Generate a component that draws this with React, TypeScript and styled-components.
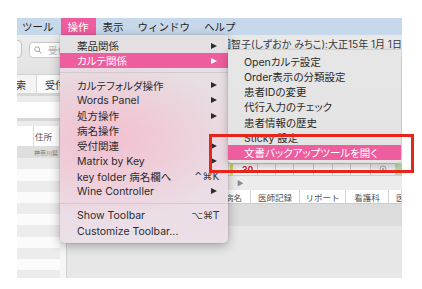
import React from 'react';
import styled, { createGlobalStyle, css } from 'styled-components';

const GlobalStyle = createGlobalStyle`
  html, body {
    margin: 0;
    padding: 0;
    background: #fff;
  }
  body {
    font-family: Inter, 'Noto Sans CJK JP', sans-serif;
  }
`;

const PINK = '#ee5d9e';

const Stage = styled.div`
  position: relative;
  width: 385px;
  height: 260px;
  margin: 18px 0 0 17px;
`;

const Screen = styled.div`
  position: relative;
  width: 385px;
  height: 260px;
  overflow: hidden;
  display: flex;
  flex-direction: column;
  background: #e8e8e8;
`;

const MenuBar = styled.div`
  flex: none;
  height: 17px;
  display: flex;
  background: #c7d8ea;
  color: #1f1f1f;
  font-size: 10.5px;
  & > :first-child {
    margin-left: -2px;
  }
`;

const MenuTitle = styled.div<{ $active?: boolean }>`
  display: flex;
  align-items: center;
  padding: 0 7px;
  ${(p) =>
    p.$active &&
    css`
      background: ${PINK};
      color: #fff;
    `}
`;

const Window = styled.div`
  flex: 1;
  display: flex;
  min-height: 0;
`;

/* ---------- left list pane ---------- */

const LeftPane = styled.div`
  width: 43px;
  flex: none;
  display: flex;
  flex-direction: column;
  overflow: hidden;
  background: #fafafa;
`;

const LeftToolbar = styled.div`
  height: 40px;
  flex: none;
  display: flex;
  align-items: flex-end;
  padding-bottom: 16px;
  box-sizing: border-box;
  background: linear-gradient(#ececec, #e2e2e2);
  border-bottom: 1px solid #d2d2d2;
`;

const ToolButton = styled.div`
  width: 12px;
  height: 18px;
  flex: none;
  margin-left: -7px;
  box-sizing: border-box;
  border: 1px solid #c2c2c2;
  border-radius: 4px;
  background: #f7f7f7;
`;

const SearchBox = styled.div`
  width: 48px;
  height: 16px;
  flex: none;
  margin-left: 7px;
  box-sizing: border-box;
  display: flex;
  align-items: center;
  gap: 6px;
  padding-left: 4px;
  border: 1px solid #c9c9c9;
  border-radius: 4px;
  background: #fff;
  color: #b0b0b0;
  font-size: 9.5px;
  white-space: nowrap;
  overflow: hidden;
`;

const SearchGlyph = styled.svg`
  flex: none;
  width: 8px;
  height: 8px;
`;

const TabRow = styled.div`
  height: 18px;
  flex: none;
  display: flex;
  background: #f2f2f2;
  font-size: 10px;
  color: #333;
`;

const Tab = styled.div<{ $w: number; $align: 'left' | 'right'; $selected?: boolean }>`
  width: ${(p) => p.$w}px;
  flex: none;
  display: flex;
  align-items: center;
  overflow: hidden;
  justify-content: ${(p) => (p.$align === 'right' ? 'flex-end' : 'flex-start')};
  padding: ${(p) => (p.$align === 'right' ? '0 10px 0 0' : '0 0 0 8px')};
  box-sizing: border-box;
  white-space: nowrap;
  background: ${(p) => (p.$selected ? '#f4f4f4' : '#fbfbfb')};
  border-right: 1px solid #d4d4d4;
`;

const GroupBar = styled.div<{ $h: number }>`
  height: ${(p) => p.$h}px;
  flex: none;
  box-sizing: border-box;
  background: #ececec;
  border-top: 3px solid #d8d8d8;
`;

const BlankRow = styled.div<{ $h: number }>`
  height: ${(p) => p.$h}px;
  flex: none;
  background: #fff;
`;

const ListHeader = styled.div`
  height: 20px;
  flex: none;
  display: flex;
  background: #fff;
  font-size: 8.5px;
  color: #555;
`;

const ListHeadCell = styled.div<{ $w?: number }>`
  ${(p) => (p.$w ? `width: ${p.$w}px; flex: none;` : 'flex: 1;')}
  display: flex;
  align-items: center;
  padding-left: 1px;
  white-space: nowrap;
  border-right: 1px solid #dcdcdc;
`;

const ListRow = styled.div`
  height: 12px;
  flex: none;
  display: flex;
  align-items: center;
  padding-left: 17px;
  background: #dedede;
  font-size: 6px;
  color: #777;
  white-space: nowrap;
`;

const Stripes = styled.div`
  flex: 1;
  background: repeating-linear-gradient(
    #ececec 0px,
    #ececec 11.25px,
    #fbfbfb 11.25px,
    #fbfbfb 22.5px
  );
`;

const Gutter = styled.div`
  width: 7px;
  flex: none;
  box-sizing: border-box;
  background: #f6f6f6;
  border-right: 1px solid #cfcfcf;
`;

/* ---------- right chart pane ---------- */

const RightPane = styled.div`
  flex: 1;
  display: flex;
  flex-direction: column;
  min-width: 0;
`;

const TitleRow = styled.div`
  height: 17px;
  flex: none;
  display: flex;
  align-items: center;
  padding-left: 144px;
  overflow: hidden;
  white-space: nowrap;
  background: #e8e8e8;
  color: #3a3a3a;
  font-size: 10px;
  font-feature-settings: 'palt' 1;
`;

const SheetBody = styled.div`
  height: 111px;
  flex: none;
  background: #f2f2f2;
`;

const CalendarRow = styled.div`
  height: 13px;
  flex: none;
  display: flex;
  box-sizing: border-box;
  background: #f5f5f5;
  border-top: 1px solid #d6d6d6;
  border-bottom: 1px solid #b9ddb0;
`;

const CalSpacer = styled.div`
  width: 163px;
  flex: none;
`;

const CalMark = styled.div`
  width: 3px;
  flex: none;
  background: #d6df6e;
`;

const CalCell = styled.div<{ $w: number; $today?: boolean }>`
  width: ${(p) => p.$w}px;
  flex: none;
  display: flex;
  align-items: center;
  box-sizing: border-box;
  border-right: 1px solid #cdcdcd;
  background: #fafafa;
  ${(p) =>
    p.$today &&
    css`
      padding-left: 9px;
      color: #d8262c;
      font-weight: 700;
      font-size: 8.5px;
    `}
`;

const CalIconCell = styled.div`
  width: 24px;
  flex: none;
  display: flex;
  align-items: center;
  justify-content: center;
  background: #f1f1f1;
`;

const CalGreen = styled.div`
  flex: 1;
  background: #b4dcab;
`;

const ExpandRow = styled.div`
  height: 14px;
  flex: none;
  display: flex;
  align-items: center;
  padding-left: 170px;
  background: #ececec;
  color: #8a8a8a;
  font-size: 7px;
`;

const ColumnHeader = styled.div`
  height: 14px;
  flex: none;
  display: flex;
  box-sizing: border-box;
  background: #fff;
  border-bottom: 1px solid #cbcbcb;
  font-size: 8.5px;
  color: #555;
`;

const HeadCell = styled.div<{ $w?: number; $align: 'right' | 'center' | 'left' }>`
  ${(p) => (p.$w ? `width: ${p.$w}px; flex: none;` : 'flex: 1;')}
  display: flex;
  align-items: center;
  box-sizing: border-box;
  white-space: nowrap;
  overflow: hidden;
  justify-content: ${(p) =>
    p.$align === 'right' ? 'flex-end' : p.$align === 'center' ? 'center' : 'flex-start'};
  padding: ${(p) => (p.$align === 'right' ? '0 8px 0 0' : p.$align === 'left' ? '0 0 0 7px' : '0')};
  border-right: 1px solid #d6d6d6;
`;

const DarkBand = styled.div`
  height: 22px;
  flex: none;
  background: #dcdcdc;
`;

const Rest = styled.div`
  flex: 1;
  background: #e7e7e7;
`;

/* ---------- menus ---------- */

const Dropdown = styled.div`
  position: absolute;
  left: 43px;
  top: 17px;
  width: 168px;
  padding: 3px 0 4px;
  box-sizing: border-box;
  border-radius: 0 0 5px 5px;
  background:
    radial-gradient(ellipse 75% 40% at 28% 50%, rgba(243, 190, 206, 0.95), rgba(243, 190, 206, 0) 100%),
    linear-gradient(#e4e1e3, #eadbe2 55%, #ebdfe8);
  box-shadow: 0 3px 11px rgba(0, 0, 0, 0.3), 0 0 0 0.5px rgba(0, 0, 0, 0.12);
  color: #2b2b2b;
  font-size: 10.5px;
  font-feature-settings: 'palt' 1;
  z-index: 2;
`;

const Submenu = styled.div`
  position: absolute;
  left: 211px;
  top: 32px;
  width: 173px;
  padding: 3.4px 0 2.5px;
  box-sizing: border-box;
  border-radius: 0 0 4px 4px;
  background: linear-gradient(#e6e6e6, #e3e3e3);
  box-shadow: 0 3px 9px rgba(0, 0, 0, 0.25), 0 0 0 0.5px rgba(0, 0, 0, 0.1);
  color: #2b2b2b;
  font-size: 10.5px;
  font-feature-settings: 'palt' 1;
  z-index: 3;
`;

const MenuRow = styled.div<{ $h: number; $indent: number; $active?: boolean }>`
  height: ${(p) => p.$h}px;
  display: flex;
  align-items: center;
  justify-content: space-between;
  padding: 0 9px 0 ${(p) => p.$indent}px;
  white-space: nowrap;
  ${(p) =>
    p.$active &&
    css`
      background: ${PINK};
      color: #fff;
    `}
`;

const Separator = styled.div`
  height: 9.2px;
  display: flex;
  align-items: center;
  &::after {
    content: '';
    flex: 1;
    height: 1px;
    background: #d3c9ce;
  }
`;

const Arrow = styled.span`
  width: 0;
  height: 0;
  margin-right: 2px;
  border-top: 3.5px solid transparent;
  border-bottom: 3.5px solid transparent;
  border-left: 6px solid currentColor;
`;

const Shortcut = styled.span`
  font-family: 'DejaVu Sans', Inter, sans-serif;
  font-size: 10px;
  color: #3a3a3a;
`;

const RedBox = styled.div`
  position: absolute;
  left: 192px;
  top: 116px;
  width: 205px;
  height: 39px;
  box-sizing: border-box;
  border: 3px solid #e6251d;
  z-index: 5;
`;

type Entry = { label: string; arrow?: boolean; shortcut?: string; active?: boolean } | 'sep';

const mainItems: Entry[] = [
  { label: '薬品関係', arrow: true },
  { label: 'カルテ関係', arrow: true, active: true },
  'sep',
  { label: 'カルテフォルダ操作', arrow: true },
  { label: 'Words Panel', arrow: true },
  { label: '処方操作', arrow: true },
  { label: '病名操作' },
  { label: '受付関連', arrow: true },
  { label: 'Matrix by Key', arrow: true },
  { label: 'key folder 病名欄へ', shortcut: '^⌘K' },
  { label: 'Wine Controller', arrow: true },
  'sep',
  { label: 'Show Toolbar', shortcut: '⌥⌘T' },
  { label: 'Customize Toolbar...' },
];

const subItems = [
  'Openカルテ設定',
  'Order表示の分類設定',
  '患者IDの変更',
  '代行入力のチェック',
  '患者情報の歴史',
  'Sticky 設定',
  '文書バックアップツールを開く',
];

const calWidths = [18, 18, 20, 19, 18, 20];
const headCols = [
  { label: '病名', w: 184, align: 'right' as const },
  { label: '医師記録', w: 49, align: 'center' as const },
  { label: 'リポート', w: 46, align: 'center' as const },
  { label: '看護科', w: 43, align: 'center' as const },
  { label: '医事', align: 'left' as const },
];

const SearchIcon = () => (
  <SearchGlyph viewBox="0 0 8 8">
    <circle cx="3.2" cy="3.2" r="2.4" fill="none" stroke="#9a9a9a" strokeWidth="0.9" />
    <line x1="5" y1="5" x2="7.4" y2="7.4" stroke="#9a9a9a" strokeWidth="0.9" />
  </SearchGlyph>
);

const PinIcon = () => (
  <svg width="8" height="9" viewBox="0 0 8 9">
    <circle cx="4" cy="4" r="3" fill="none" stroke="#a0a0a0" strokeWidth="0.9" />
    <circle cx="4" cy="4" r="1" fill="#a0a0a0" />
  </svg>
);

export default function App() {
  return (
    <>
      <GlobalStyle />
      <Stage>
        <Screen>
          <MenuBar>
            <MenuTitle>ツール</MenuTitle>
            <MenuTitle $active>操作</MenuTitle>
            <MenuTitle>表示</MenuTitle>
            <MenuTitle>ウィンドウ</MenuTitle>
            <MenuTitle>ヘルプ</MenuTitle>
          </MenuBar>

          <Window>
            <LeftPane>
              <LeftToolbar>
                <ToolButton />
                <SearchBox>
                  <SearchIcon />
                  受付番号
                </SearchBox>
              </LeftToolbar>
              <TabRow>
                <Tab $w={20} $align="right" $selected>
                  検索
                </Tab>
                <Tab $w={40} $align="left">
                  受付
                </Tab>
              </TabRow>
              <GroupBar $h={9} />
              <BlankRow $h={16} />
              <GroupBar $h={8} />
              <ListHeader>
                <ListHeadCell $w={15} />
                <ListHeadCell>住所</ListHeadCell>
              </ListHeader>
              <ListRow>神奈川県</ListRow>
              <Stripes />
            </LeftPane>

            <Gutter />

            <RightPane>
              <TitleRow>静岡智子(しずおか みちこ):大正15年 1月 1日</TitleRow>
              <SheetBody />
              <CalendarRow>
                <CalSpacer />
                <CalMark />
                <CalCell $w={25} $today>
                  30
                </CalCell>
                {calWidths.map((w, i) => (
                  <CalCell key={i} $w={w} />
                ))}
                <CalIconCell>
                  <PinIcon />
                </CalIconCell>
                <CalGreen />
              </CalendarRow>
              <ExpandRow>▶</ExpandRow>
              <ColumnHeader>
                {headCols.map((c) => (
                  <HeadCell key={c.label} $w={c.w} $align={c.align}>
                    {c.label}
                  </HeadCell>
                ))}
              </ColumnHeader>
              <DarkBand />
              <Rest />
            </RightPane>
          </Window>

          <Dropdown>
            {mainItems.map((it, i) =>
              it === 'sep' ? (
                <Separator key={i} />
              ) : (
                <MenuRow key={i} $h={15.2} $indent={17} $active={it.active}>
                  <span>{it.label}</span>
                  {it.arrow && <Arrow />}
                  {it.shortcut && <Shortcut>{it.shortcut}</Shortcut>}
                </MenuRow>
              )
            )}
          </Dropdown>

          <Submenu>
            {subItems.map((label, i) => (
              <MenuRow key={label} $h={15.3} $indent={16} $active={i === subItems.length - 1}>
                <span>{label}</span>
              </MenuRow>
            ))}
          </Submenu>
        </Screen>
        <RedBox />
      </Stage>
    </>
  );
}
